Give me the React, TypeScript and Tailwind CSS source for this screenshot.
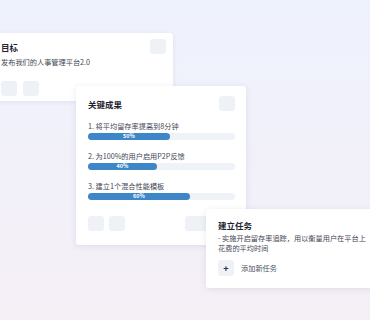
import React from "react";

const font = { fontFamily: '"Noto Sans CJK SC", "Noto Sans", sans-serif' };

const results = [
  { label: "1. 将平均留存率提高到8分钟", pct: "50%", w: "w-[82px]" },
  { label: "2. 为100%的用户启用P2P反馈", pct: "40%", w: "w-[69px]" },
  { label: "3. 建立1个混合性能模板", pct: "60%", w: "w-[102px]" },
];

const Square = ({ className = "" }: { className?: string }) => (
  <span className={`block h-[15px] w-[16px] rounded-[3px] bg-[#eef1f6] ${className}`}></span>
);

const App = () => {
  return (
    <div
      style={font}
      className="relative h-[320px] w-[370px] overflow-hidden bg-gradient-to-b from-[#eef2fd] to-[#f5eff6]"
    >
      {/* goal card */}
      <div className="absolute left-[-11px] top-[33px] flex h-[68px] w-[184px] flex-col rounded-[3px] bg-white pl-[12px] pr-[7px] pt-[6px] shadow-[0_1px_5px_rgba(40,50,90,0.08)]">
        <div className="flex items-center justify-between">
          <h1 className="text-[8.5px] font-bold leading-[14px] text-[#1f2430]">目标</h1>
          <Square />
        </div>
        <p className="mt-[3px] text-[7.2px] leading-[10px] text-[#3f4654]">发布我们的人事管理平台2.0</p>
        <div className="mt-[14px] flex gap-x-[6px]">
          <Square />
          <Square />
        </div>
      </div>

      {/* key results card */}
      <div className="absolute left-[76px] top-[86px] flex h-[159px] w-[170px] flex-col rounded-[3px] bg-white pl-[12px] pr-[11px] pt-[10px] shadow-[0_1px_6px_rgba(40,50,90,0.1)]">
        <div className="flex items-center justify-between">
          <h1 className="text-[8.5px] font-bold leading-[14px] text-[#1f2430]">关键成果</h1>
          <Square />
        </div>
        <div className="mt-[10px] flex flex-col gap-y-[11px]">
          {results.map((item, index) => (
            <div key={index} className="flex flex-col gap-y-[2px]">
              <p className="text-[7.2px] leading-[10px] text-[#3f4654]">{item.label}</p>
              <div className="h-[7px] w-full rounded-full bg-[#eff2f6]">
                <div
                  className={`flex h-[7px] items-center justify-center rounded-full bg-[#3d86c8] text-[5.5px] font-bold leading-none text-white ${item.w}`}
                >
                  {item.pct}
                </div>
              </div>
            </div>
          ))}
        </div>
        <div className="mt-[16px] flex items-center justify-between">
          <div className="flex gap-x-[5px]">
            <Square />
            <Square />
          </div>
          <span className="block h-[15px] w-[50px] rounded-[3px] bg-[#eef1f6]"></span>
        </div>
      </div>

      {/* task card */}
      <div className="absolute left-[206px] top-[209px] flex h-[79px] w-[176px] flex-col rounded-[3px] bg-white pl-[12px] pt-[5px] shadow-[0_1px_6px_rgba(40,50,90,0.1)]">
        <div className="flex items-start justify-between">
          <h1 className="mt-[4px] text-[8.5px] font-bold leading-[14px] text-[#1f2430]">建立任务</h1>
          <Square className="mr-[-5px]" />
        </div>
        <p className="mt-[1px] text-[7.2px] leading-[10px] text-[#3f4654]">
          - 实施开启留存率追踪，用以衡量用户在平台上
          <br />
          花费的平均时间
        </p>
        <div className="mt-[7px] flex items-center gap-x-[7px]">
          <span className="flex h-[16px] w-[16px] items-center justify-center rounded-[3px] bg-[#eef1f6] text-[9px] font-bold leading-none text-[#2a3040]">
            +
          </span>
          <span className="text-[7.2px] leading-[10px] text-[#4b5260]">添加新任务</span>
        </div>
      </div>
    </div>
  );
};

export default App;
